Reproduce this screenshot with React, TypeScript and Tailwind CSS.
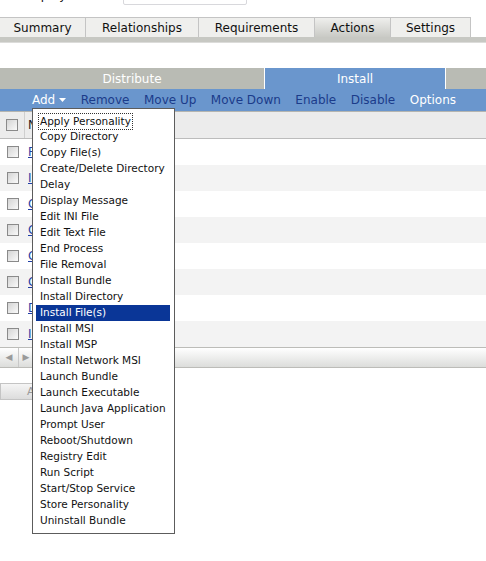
import React from "react";

const tabs = [
	{ label: "Summary", w: "w-[86px]" },
	{ label: "Relationships", w: "w-[113px]" },
	{ label: "Requirements", w: "w-[116px]" },
	{ label: "Actions", w: "w-[76px]", active: true },
	{ label: "Settings", w: "w-[80px]" },
];

const tools = [
	{ label: "Remove" },
	{ label: "Move Up" },
	{ label: "Move Down" },
	{ label: "Enable" },
	{ label: "Disable" },
];

const rows = ["Patch Files", "Install MSI", "Copy Directory", "Create Directory", "Copy File(s)", "Copy File(s)", "Delay", "Install Bundle"];

const menuItems = [
	"Apply Personality",
	"Copy Directory",
	"Copy File(s)",
	"Create/Delete Directory",
	"Delay",
	"Display Message",
	"Edit INI File",
	"Edit Text File",
	"End Process",
	"File Removal",
	"Install Bundle",
	"Install Directory",
	"Install File(s)",
	"Install MSI",
	"Install MSP",
	"Install Network MSI",
	"Launch Bundle",
	"Launch Executable",
	"Launch Java Application",
	"Prompt User",
	"Reboot/Shutdown",
	"Registry Edit",
	"Run Script",
	"Start/Stop Service",
	"Store Personality",
	"Uninstall Bundle",
];

function CheckBox() {
	return <div className="w-[12px] h-[12px] border border-[#8a8a8a] bg-gradient-to-br from-[#d4d4d4] to-[#fafafa]" />;
}

export default function App() {
	const selected = "Install File(s)";

	return (
		<div className="relative w-[486px] h-[561px] overflow-hidden bg-white font-['DejaVu_Sans',sans-serif] text-[#111]">
			{/* clipped field row above the tabs */}
			<div className="h-[17px] overflow-hidden">
				<div className="flex items-end -mt-[15px] h-[20px]">
					<span className="pl-[22px] w-[123px] text-[12px] leading-[16px] mb-[2px]">Display name:</span>
					<div className="w-[124px] h-[20px] border border-[#d8d8dc] rounded-[2px] pl-[16px] text-[12px] leading-[12px]">(Unnamed)</div>
				</div>
			</div>

			{/* main tabs */}
			<div className="flex h-[20px]">
				{tabs.map((tab) => (
					<div
						key={tab.label}
						className={`${tab.w} flex items-center justify-center border-t border-r border-[#c4c4c4] text-[12px] text-[#111] ${
							tab.active ? "bg-gradient-to-b from-[#efefed] to-[#c9cac5]" : "bg-[#efefed]"
						}`}
					>
						{tab.label}
					</div>
				))}
			</div>
			<div className="h-[6px] bg-[#c7c8c3] border-b border-[#dcdcda]" />

			<div className="h-[25px]" />

			{/* sub tabs */}
			<div className="flex h-[21px] bg-[#b9bbb4] text-[12px] text-white">
				<div className="w-[264px] flex items-center justify-center">Distribute</div>
				<div className="w-[182px] flex items-center justify-center bg-[#6a96cd] border-x border-white">Install</div>
			</div>

			{/* toolbar */}
			<div className="flex items-center h-[23px] bg-[#6a96cd] border-b border-[#b5b5b0] pl-[32px] gap-[14.5px] text-[12px]">
				<span className="flex items-center gap-[4px] text-white">
					Add
					<svg width="7" height="4" viewBox="0 0 7 4">
						<path d="M0 0h7L3.5 4z" fill="#fff" />
					</svg>
				</span>
				{tools.map((t) => (
					<span key={t.label} className="text-[#1b3b8a]">
						{t.label}
					</span>
				))}
				<span className="text-white">Options</span>
			</div>

			{/* table */}
			<div className="flex items-center h-[27px] bg-[#ececec] border-b border-[#bcbcbc]">
				<div className="w-[25px] h-full flex items-center justify-center border-r border-[#cfcfcf]">
					<CheckBox />
				</div>
				<span className="pl-[3px] text-[12px] text-[#222]">Name</span>
			</div>
			{rows.map((r, i) => (
				<div key={i} className={`flex items-center h-[26px] ${i % 2 === 1 ? "bg-[#f3f3f3]" : "bg-white"}`}>
					<div className="w-[25px] flex items-center justify-center">
						<CheckBox />
					</div>
					<span className="pl-[3px] text-[12px] text-[#1f3fa6] underline">{r}</span>
				</div>
			))}

			{/* horizontal scrollbar */}
			<div className="flex h-[21px] border-y border-[#bcbcb8] bg-gradient-to-b from-[#ffffff] to-[#dcdddb]">
				<div className="w-[19px] flex items-center justify-center border-r border-[#c8c8c8] text-[9px] text-[#9a9a9a]">◀</div>
				<div className="w-[14px] flex items-center justify-center text-[9px] text-[#9a9a9a]">▶</div>
			</div>

			<div className="h-[15px]" />
			<div className="flex">
				<div className="w-[110px] h-[17px] border border-[#c4c4c4] bg-gradient-to-b from-[#f5f5f5] to-[#dcdcdc] pl-[26px] text-[11px] leading-[15px] text-[#999]">
					Add
				</div>
			</div>

			{/* Add dropdown menu */}
			<div className="absolute left-[32px] top-[108px] w-[143px] border border-[#5c5c5c] bg-white pt-[4px] pb-[4px]">
				{menuItems.map((item, i) => (
					<div
						key={item}
						className={`ml-[3px] mr-[4px] h-[16px] flex items-center pl-[4px] text-[10.5px] ${
							item === selected ? "bg-[#0a3697] text-white" : "text-[#111]"
						}`}
					>
						<span className={i === 0 ? "outline-1 outline-dotted outline-[#333] px-[1px] -ml-[1px] leading-[15px]" : ""}>{item}</span>
					</div>
				))}
			</div>
		</div>
	);
}
